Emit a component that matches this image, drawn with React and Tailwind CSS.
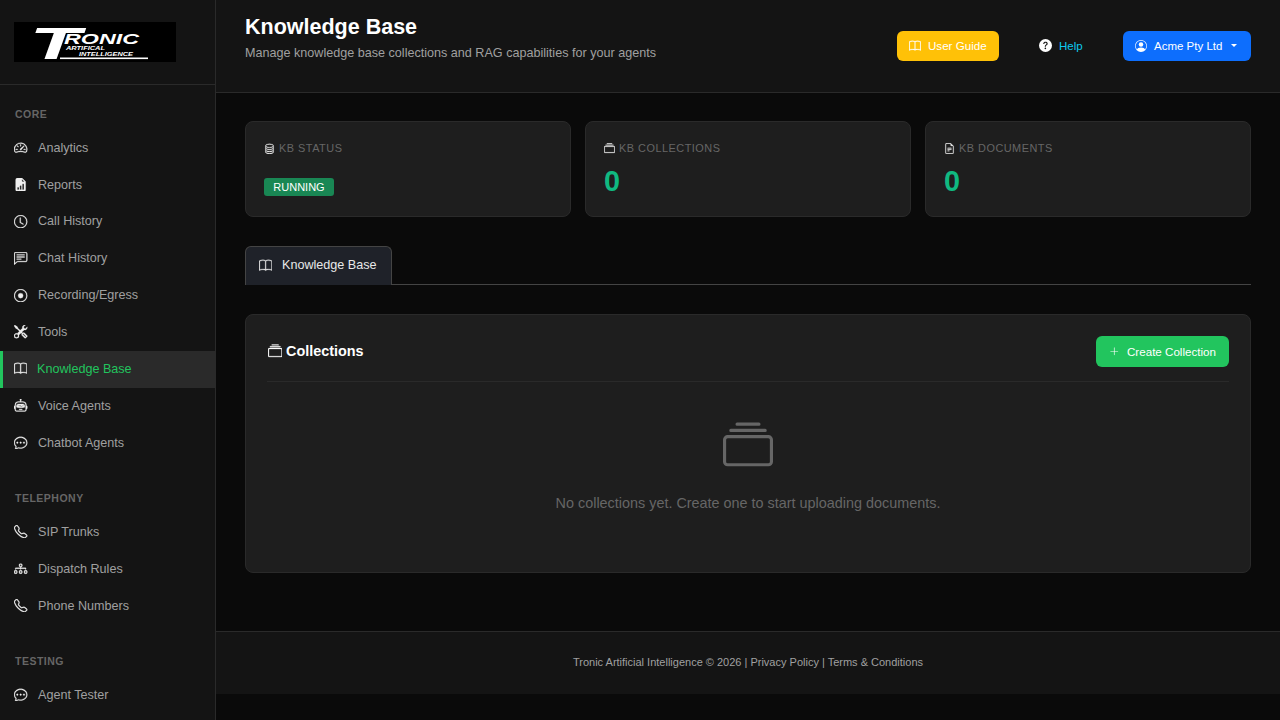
import React from "react";
import {
  BsSpeedometer2, BsFileEarmarkBarGraphFill, BsClock, BsChatLeftText, BsRecordCircle, BsTools, BsBook,
  BsRobot, BsChatDots, BsTelephone, BsDiagram3, BsCollection, BsDatabase, BsFileEarmarkText,
  BsQuestionCircleFill, BsPersonCircle, BsPlusLg,
} from "react-icons/bs";

function Logo() {
  return (
    <svg width="162" height="40" viewBox="0 0 162 40" className="block">
      <rect width="162" height="40" fill="#000" />
      <g fill="#fff" fontFamily="'Liberation Sans', sans-serif" fontWeight="700" fontStyle="italic">
        <text transform="translate(15.5,37) scale(1.85,1)" fontSize="45">T</text>
        <text x="50" y="22" fontSize="14" textLength="75" lengthAdjust="spacingAndGlyphs">RONIC</text>
        <text x="52" y="28" fontSize="5" textLength="39" lengthAdjust="spacingAndGlyphs">ARTIFICAL</text>
        <text x="65" y="33.5" fontSize="5" textLength="54" lengthAdjust="spacingAndGlyphs">INTELLIGENCE</text>
      </g>
      <rect x="46" y="35.5" width="88" height="1.6" fill="#fff" />
    </svg>
  );
}

function Item({ icon: Icon, label, active }) {
  return (
    <div className={active
      ? "h-[36.9px] flex items-center border-l-[3px] border-[#22c55e] bg-[#2a2a2a] pl-[10.5px] text-[#22c55e]"
      : "h-[36.9px] flex items-center pl-[14.4px] text-[#a0a0a0]"}>
      <Icon className="text-[#f0f0f0] stroke-current stroke-[0.35px] w-[13.3px] h-[13.3px] mb-[1px] shrink-0" />
      <span className="ml-[10.3px] text-[12.6px]">{label}</span>
    </div>
  );
}

function Label({ children, className }) {
  return <div className={"h-[16px] pt-[1px] flex items-center pl-[15px] text-[10.5px] font-bold tracking-[0.5px] text-[#666] " + className}>{children}</div>;
}

function Stat({ icon: Icon, label, children }) {
  return (
    <div className="h-[96px] flex-1 rounded-lg border border-[#2a2a2a] bg-[#1e1e1e] px-[18px] pt-[19px]">
      <div className="h-[14px] flex items-center text-[10.9px] tracking-[0.5px] text-[#666]">
        <Icon className="w-[11px] h-[11px] text-[#e8e8e8] stroke-current stroke-[0.3px] mr-[4px] mt-[1px]" />
        <span>{label}</span>
      </div>
      {children}
    </div>
  );
}

function Zero() {
  return <div className="mt-[10px] h-[32px] flex items-center text-[28.8px] font-bold leading-none text-[#10b981]">0</div>;
}

export default function App() {
  return (
    <div className="h-[720px] w-[1280px] flex overflow-hidden bg-[#0a0a0a] font-['Liberation_Sans',sans-serif]">
      <aside className="w-[216px] shrink-0 h-full overflow-hidden bg-[#141414] border-r border-[#2a2a2a]">
        <div className="h-[85px] border-b border-[#2a2a2a] pl-[14px] pt-[22px]"><Logo /></div>
        <Label className="mt-[21px] mb-[7.7px]">CORE</Label>
        <Item icon={BsSpeedometer2} label="Analytics" />
        <Item icon={BsFileEarmarkBarGraphFill} label="Reports" />
        <Item icon={BsClock} label="Call History" />
        <Item icon={BsChatLeftText} label="Chat History" />
        <Item icon={BsRecordCircle} label="Recording/Egress" />
        <Item icon={BsTools} label="Tools" />
        <Item icon={BsBook} label="Knowledge Base" active />
        <Item icon={BsRobot} label="Voice Agents" />
        <Item icon={BsChatDots} label="Chatbot Agents" />
        <Label className="mt-[28.2px] mb-[7.9px]">TELEPHONY</Label>
        <Item icon={BsTelephone} label="SIP Trunks" />
        <Item icon={BsDiagram3} label="Dispatch Rules" />
        <Item icon={BsTelephone} label="Phone Numbers" />
        <Label className="mt-[29.2px] mb-[7.2px]">TESTING</Label>
        <Item icon={BsChatDots} label="Agent Tester" />
      </aside>

      <div className="flex-1 min-w-0">
        <header className="h-[93px] bg-[#141414] border-b border-[#2a2a2a] flex items-start justify-between pl-[29px] pr-[29px]">
          <div className="pt-[14px]">
            <h1 className="text-[21.5px] leading-[26px] font-bold text-white">Knowledge Base</h1>
            <p className="mt-[5px] text-[12.6px] leading-[16px] text-[#a0a0a0]">Manage knowledge base collections and RAG capabilities for your agents</p>
          </div>
          <div className="flex items-center pt-[31px]">
            <div className="h-[30px] w-[102px] rounded-md bg-[#ffc107] flex items-center pl-[12px] text-[11.6px] text-white">
              <BsBook className="w-[12px] h-[12px] mr-[7px] mb-[1px] stroke-current stroke-[0.3px]" /><span>User Guide</span>
            </div>
            <div className="ml-[40px] w-[84px] h-[30px] flex items-center text-[11.5px] text-[#0dcaf0]">
              <BsQuestionCircleFill className="w-[13px] h-[13px] text-white mr-[7px] mb-[1px]" /><span className="mt-[1px]">Help</span>
            </div>
            <div className="h-[30px] w-[128px] rounded-md bg-[#0d6efd] flex items-center pl-[12px] text-[11.5px] text-white">
              <BsPersonCircle className="w-[12px] h-[12px] mr-[7px] mb-[1px]" /><span className="mt-[1px]">Acme Pty Ltd</span>
              <span className="ml-[9px] mb-[1px] w-0 h-0 border-x-[3.5px] border-x-transparent border-t-[3.5px] border-t-white" />
            </div>
          </div>
        </header>

        <main className="px-[29px] pt-[28px]">
          <div className="flex gap-[14px]">
            <Stat icon={BsDatabase} label="KB STATUS">
              <div className="mt-[23px] inline-flex h-[18px] w-[70px] items-center justify-center rounded-[3px] bg-[#198754] text-[11px] text-white">RUNNING</div>
            </Stat>
            <Stat icon={BsCollection} label="KB COLLECTIONS"><Zero /></Stat>
            <Stat icon={BsFileEarmarkText} label="KB DOCUMENTS"><Zero /></Stat>
          </div>

          <div className="mt-[29px] h-[39px] border-b border-[#444]">
            <div className="h-[39px] w-[147px] rounded-t-md border border-b-0 border-[#444] bg-[#1f2229] flex items-center pl-[12.5px] text-[12.6px] text-[#e8e8e8]">
              <BsBook className="w-[13.3px] h-[13.3px] mr-[10.2px] mb-[1px] stroke-current stroke-[0.3px]" /><span className="mb-[1px]">Knowledge Base</span>
            </div>
          </div>

          <section className="mt-[29px] h-[259px] rounded-lg border border-[#2a2a2a] bg-[#1e1e1e] px-[21px]">
            <div className="pt-[21px] pb-[14px] flex items-center justify-between border-b border-[#2a2a2a]">
              <div className="flex items-center text-[14.4px] font-bold text-white">
                <BsCollection className="w-[14.4px] h-[14.4px] ml-[0.6px] mr-[4px] stroke-current stroke-[0.3px]" />Collections
              </div>
              <div className="h-[31px] w-[133px] rounded-md bg-[#22c55e] flex items-center pl-[13px] text-[11.6px] text-white">
                <BsPlusLg className="w-[10.5px] h-[10.5px] mr-[7.5px]" /><span className="mt-[1px]">Create Collection</span>
              </div>
            </div>
            <div className="flex flex-col items-center pt-[39px]">
              <BsCollection className="w-[50px] h-[50px] text-[#666]" />
              <p className="mt-[23px] text-[14.4px] leading-[18px] text-[#666]">No collections yet. Create one to start uploading documents.</p>
            </div>
          </section>
        </main>

        <footer className="mt-[58px] h-[63px] bg-[#141414] border-t border-[#2a2a2a] flex items-center justify-center pb-[2px] text-[11px] text-[#a0a0a0]">
          Tronic Artificial Intelligence © 2026 | Privacy Policy | Terms &amp; Conditions
        </footer>
      </div>
    </div>
  );
}
